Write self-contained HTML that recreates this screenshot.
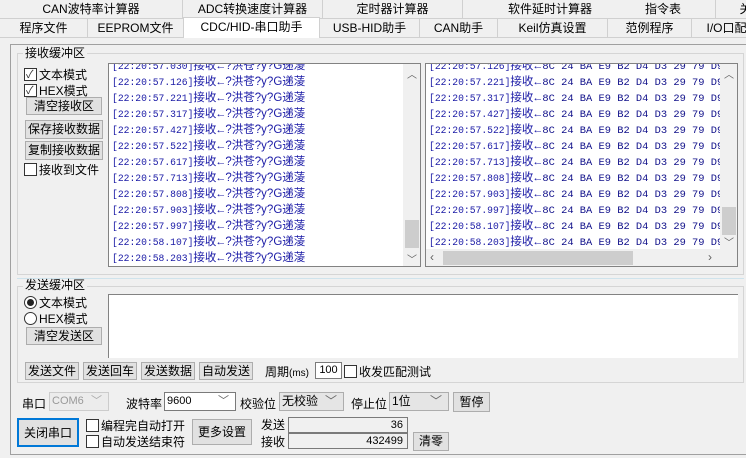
<!DOCTYPE html>
<html><head><meta charset="utf-8"><style>
*{margin:0;padding:0;box-sizing:border-box}
body{width:746px;height:458px;background:#f0f0f0;position:relative;overflow:hidden;font:12px "Liberation Sans","Noto Sans CJK SC",sans-serif;color:#000}
.a{position:absolute;white-space:nowrap}
.tab{position:absolute;height:19px;border-right:1px solid #d0d0d0;border-bottom:1px solid #d0d0d0;text-align:center;line-height:18px;background:#f0f0f0;font-size:12px}
.btn{position:absolute;background:#e1e1e1;border:1px solid #adadad;text-align:center;line-height:16px;font-size:12px}
.grp{position:absolute;border:1px solid #d5d5d5}
.gl{position:absolute;background:#f0f0f0;padding:0 2px;line-height:12px}
.cb{display:inline-block;width:13px;height:13px;border:1px solid #333;background:#fff;vertical-align:-2px;margin-right:2px;position:relative}
.rd{display:inline-block;width:13px;height:13px;border:1px solid #333;border-radius:50%;background:#fff;vertical-align:-2px;margin-right:2px;position:relative}
.ta{position:absolute;background:#fff;border:1px solid #828282;overflow:hidden}
.ln{position:absolute;left:3px;color:#1a1aa6;font-size:11.5px;line-height:16px;white-space:nowrap}
.m{font-family:"Liberation Mono",monospace;font-size:9.7px}
.h{font-family:"Liberation Mono",monospace;font-size:10.4px;color:#10108a}
.ar{display:inline-block;margin:0 -1px 0 -1px;font-size:11px}
.in{position:absolute;background:#fff;border:1px solid #7a7a7a;height:19px;line-height:17px;padding-left:2px;font-size:11px}
.sb{position:absolute;background:#f0f0f0}
</style></head><body>
<div class="tab" style="left:0;top:0;width:183px">CAN波特率计算器</div>
<div class="tab" style="left:183px;top:0;width:140px">ADC转换速度计算器</div>
<div class="tab" style="left:323px;top:0;width:140px">定时器计算器</div>
<div class="tab" style="left:463px;top:0;width:175px">软件延时计算器</div>
<div class="tab" style="left:611px;top:0;width:105px">指令表</div>
<div class="tab" style="left:716px;top:0;width:60px">关</div>
<div class="tab" style="left:0;top:19px;width:88px">程序文件</div>
<div class="tab" style="left:88px;top:19px;width:96px">EEPROM文件</div>
<div class="tab" style="left:183px;top:17px;width:137px;height:22px;background:#fff;border:1px solid #d0d0d0;border-bottom:none">CDC/HID-串口助手</div>
<div class="tab" style="left:320px;top:19px;width:100px">USB-HID助手</div>
<div class="tab" style="left:420px;top:19px;width:78px">CAN助手</div>
<div class="tab" style="left:498px;top:19px;width:110px">Keil仿真设置</div>
<div class="tab" style="left:608px;top:19px;width:84px">范例程序</div>
<div class="tab" style="left:692px;top:19px;width:70px">I/O口配</div>
<div class="a" style="left:0;top:38px;width:746px;height:420px;background:#f0f0f0"></div>
<div class="a" style="left:10px;top:44px;width:740px;height:411px;border:1px solid #a0a0a0;border-right:none"></div>
<div class="grp" style="left:17px;top:53px;width:727px;height:222px"></div>
<div class="gl" style="left:23px;top:47px">接收缓冲区</div>
<div class="a" style="left:24px;top:66px"><span class="cb"><span style="position:absolute;left:1px;top:-3px;font-size:11px;color:#333">✓</span></span>文本模式</div>
<div class="a" style="left:24px;top:82px"><span class="cb"><span style="position:absolute;left:1px;top:-3px;font-size:11px;color:#333">✓</span></span>HEX模式</div>
<div class="btn" style="left:26px;top:97px;width:76px;height:18px">清空接收区</div>
<div class="btn" style="left:25px;top:120px;width:78px;height:19px">保存接收数据</div>
<div class="btn" style="left:25px;top:141px;width:78px;height:19px">复制接收数据</div>
<div class="a" style="left:24px;top:161px"><span class="cb"></span>接收到文件</div>
<div class="ta" style="left:108px;top:63px;width:313px;height:204px">
<div class="ln" style="top:-6px"><span class="m">[22:20:57.030]</span>接收<span class="ar">←</span>?洪苍?y?G递蓤</div>
<div class="ln" style="top:10px"><span class="m">[22:20:57.126]</span>接收<span class="ar">←</span>?洪苍?y?G递蓤</div>
<div class="ln" style="top:26px"><span class="m">[22:20:57.221]</span>接收<span class="ar">←</span>?洪苍?y?G递蓤</div>
<div class="ln" style="top:42px"><span class="m">[22:20:57.317]</span>接收<span class="ar">←</span>?洪苍?y?G递蓤</div>
<div class="ln" style="top:58px"><span class="m">[22:20:57.427]</span>接收<span class="ar">←</span>?洪苍?y?G递蓤</div>
<div class="ln" style="top:74px"><span class="m">[22:20:57.522]</span>接收<span class="ar">←</span>?洪苍?y?G递蓤</div>
<div class="ln" style="top:90px"><span class="m">[22:20:57.617]</span>接收<span class="ar">←</span>?洪苍?y?G递蓤</div>
<div class="ln" style="top:106px"><span class="m">[22:20:57.713]</span>接收<span class="ar">←</span>?洪苍?y?G递蓤</div>
<div class="ln" style="top:122px"><span class="m">[22:20:57.808]</span>接收<span class="ar">←</span>?洪苍?y?G递蓤</div>
<div class="ln" style="top:138px"><span class="m">[22:20:57.903]</span>接收<span class="ar">←</span>?洪苍?y?G递蓤</div>
<div class="ln" style="top:154px"><span class="m">[22:20:57.997]</span>接收<span class="ar">←</span>?洪苍?y?G递蓤</div>
<div class="ln" style="top:170px"><span class="m">[22:20:58.107]</span>接收<span class="ar">←</span>?洪苍?y?G递蓤</div>
<div class="ln" style="top:186px"><span class="m">[22:20:58.203]</span>接收<span class="ar">←</span>?洪苍?y?G递蓤</div>
<div class="sb" style="left:294px;top:0;width:18px;height:203px"></div>
<div class="a" style="left:298px;top:2px;font-size:10px;color:#606060">︿</div>
<div class="a" style="left:298px;top:187px;font-size:10px;color:#606060">﹀</div>
<div class="a" style="left:296px;top:156px;width:14px;height:28px;background:#cdcdcd"></div>
</div>
<div class="ta" style="left:425px;top:63px;width:313px;height:204px">
<div class="ln" style="top:-6px"><span class="m">[22:20:57.126]</span>接收<span class="ar">←</span><span class="h">8C 24 BA E9 B2 D4 D3 29 79 D9</span></div>
<div class="ln" style="top:10px"><span class="m">[22:20:57.221]</span>接收<span class="ar">←</span><span class="h">8C 24 BA E9 B2 D4 D3 29 79 D9</span></div>
<div class="ln" style="top:26px"><span class="m">[22:20:57.317]</span>接收<span class="ar">←</span><span class="h">8C 24 BA E9 B2 D4 D3 29 79 D9</span></div>
<div class="ln" style="top:42px"><span class="m">[22:20:57.427]</span>接收<span class="ar">←</span><span class="h">8C 24 BA E9 B2 D4 D3 29 79 D9</span></div>
<div class="ln" style="top:58px"><span class="m">[22:20:57.522]</span>接收<span class="ar">←</span><span class="h">8C 24 BA E9 B2 D4 D3 29 79 D9</span></div>
<div class="ln" style="top:74px"><span class="m">[22:20:57.617]</span>接收<span class="ar">←</span><span class="h">8C 24 BA E9 B2 D4 D3 29 79 D9</span></div>
<div class="ln" style="top:90px"><span class="m">[22:20:57.713]</span>接收<span class="ar">←</span><span class="h">8C 24 BA E9 B2 D4 D3 29 79 D9</span></div>
<div class="ln" style="top:106px"><span class="m">[22:20:57.808]</span>接收<span class="ar">←</span><span class="h">8C 24 BA E9 B2 D4 D3 29 79 D9</span></div>
<div class="ln" style="top:122px"><span class="m">[22:20:57.903]</span>接收<span class="ar">←</span><span class="h">8C 24 BA E9 B2 D4 D3 29 79 D9</span></div>
<div class="ln" style="top:138px"><span class="m">[22:20:57.997]</span>接收<span class="ar">←</span><span class="h">8C 24 BA E9 B2 D4 D3 29 79 D9</span></div>
<div class="ln" style="top:154px"><span class="m">[22:20:58.107]</span>接收<span class="ar">←</span><span class="h">8C 24 BA E9 B2 D4 D3 29 79 D9</span></div>
<div class="ln" style="top:170px"><span class="m">[22:20:58.203]</span>接收<span class="ar">←</span><span class="h">8C 24 BA E9 B2 D4 D3 29 79 D9</span></div>
<div class="sb" style="left:294px;top:0;width:18px;height:203px"></div>
<div class="a" style="left:298px;top:2px;font-size:10px;color:#606060">︿</div>
<div class="a" style="left:298px;top:170px;font-size:10px;color:#606060">﹀</div>
<div class="a" style="left:296px;top:143px;width:14px;height:28px;background:#cdcdcd"></div>
<div class="sb" style="left:0;top:185px;width:294px;height:18px"></div>
<div class="a" style="left:17px;top:187px;width:190px;height:14px;background:#cdcdcd"></div>
<div class="a" style="left:4px;top:186px;color:#606060">‹</div>
<div class="a" style="left:282px;top:186px;color:#606060">›</div>
<div class="sb" style="left:294px;top:185px;width:18px;height:18px"></div>
</div>
<div class="a" style="left:17px;top:278px;width:727px;height:1px;background:#cfe3ec"></div>
<div class="grp" style="left:17px;top:286px;width:727px;height:97px"></div>
<div class="gl" style="left:23px;top:279px">发送缓冲区</div>
<div class="a" style="left:24px;top:294px"><span class="rd"><span style="position:absolute;left:2px;top:2px;width:7px;height:7px;border-radius:50%;background:#222"></span></span>文本模式</div>
<div class="a" style="left:24px;top:310px"><span class="rd"></span>HEX模式</div>
<div class="btn" style="left:26px;top:327px;width:76px;height:18px">清空发送区</div>
<div class="ta" style="left:108px;top:294px;width:630px;height:64px;border-right:none;border-bottom:none"></div>
<div class="btn" style="left:25px;top:362px;width:54px;height:18px">发送文件</div>
<div class="btn" style="left:83px;top:362px;width:54px;height:18px">发送回车</div>
<div class="btn" style="left:141px;top:362px;width:54px;height:18px">发送数据</div>
<div class="btn" style="left:199px;top:362px;width:54px;height:18px">自动发送</div>
<div class="a" style="left:265px;top:363px">周期<span style="font-size:10px">(ms)</span></div>
<div class="in" style="left:315px;top:362px;width:27px;height:17px;line-height:15px;text-align:center;padding:0">100</div>
<div class="a" style="left:344px;top:363px"><span class="cb"></span>收发匹配测试</div>
<div class="a" style="left:22px;top:395px">串口</div>
<div class="in" style="left:49px;top:392px;width:60px;background:#ececec;border-color:#ccc;color:#999">COM6<span style="position:absolute;right:6px;color:#aaa">﹀</span></div>
<div class="a" style="left:126px;top:395px">波特率</div>
<div class="in" style="left:164px;top:392px;width:72px">9600<span style="position:absolute;right:6px;color:#666">﹀</span></div>
<div class="a" style="left:240px;top:395px">校验位</div>
<div class="in" style="left:279px;top:392px;width:65px;background:#e5e5e5;border-color:#adadad;font-size:12px">无校验<span style="position:absolute;right:6px;color:#666">﹀</span></div>
<div class="a" style="left:351px;top:395px">停止位</div>
<div class="in" style="left:389px;top:392px;width:60px;background:#e5e5e5;border-color:#adadad;font-size:12px">1位<span style="position:absolute;right:6px;color:#666">﹀</span></div>
<div class="btn" style="left:453px;top:392px;width:37px;height:20px;line-height:18px">暂停</div>
<div class="btn" style="left:17px;top:418px;width:62px;height:29px;line-height:26px;border:2px solid #0078d7">关闭串口</div>
<div class="a" style="left:86px;top:417px"><span class="cb"></span>编程完自动打开</div>
<div class="a" style="left:86px;top:433px"><span class="cb"></span>自动发送结束符</div>
<div class="btn" style="left:192px;top:419px;width:60px;height:26px;line-height:24px">更多设置</div>
<div class="a" style="left:261px;top:416px">发送</div>
<div class="in" style="left:288px;top:417px;width:120px;height:16px;line-height:14px;background:#f0f0f0;text-align:right;padding-right:4px">36</div>
<div class="a" style="left:261px;top:433px">接收</div>
<div class="in" style="left:288px;top:433px;width:120px;height:16px;line-height:14px;background:#f0f0f0;text-align:right;padding-right:4px">432499</div>
<div class="btn" style="left:413px;top:432px;width:36px;height:19px">清零</div>
<div class="a" style="left:10px;top:454px;width:736px;height:1px;background:#a0a0a0"></div>
</body></html>
